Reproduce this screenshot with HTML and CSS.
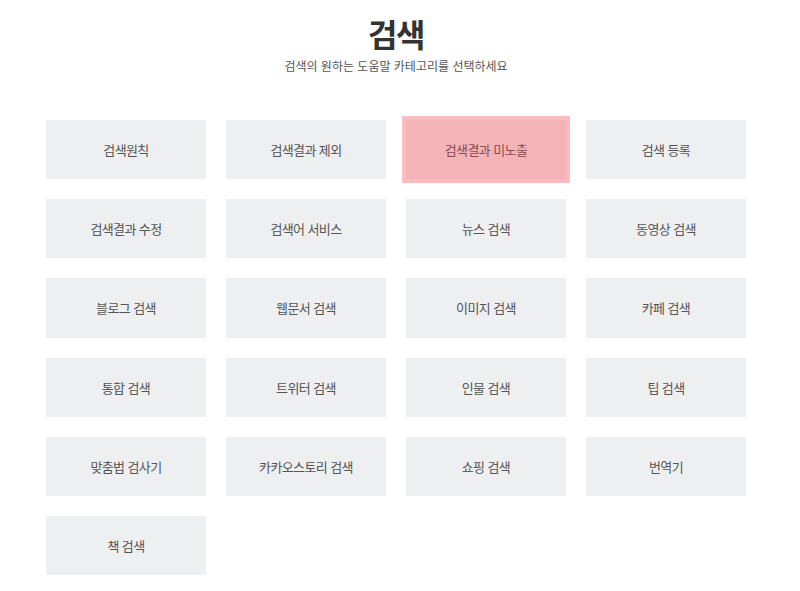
FILE: index.html
```html
<!DOCTYPE html>
<html lang="ko">
<head>
<meta charset="utf-8">
<title>검색</title>
<link rel="stylesheet" href="styles.css">
</head>
<body>
<div class="page">
  <header class="head">
    <h1 class="title">검색</h1>
    <p class="sub">검색의 원하는 도움말 카테고리를 선택하세요</p>
  </header>
  <ul class="grid">
    <li class="cell">검색원칙</li>
    <li class="cell">검색결과 제외</li>
    <li class="cell cell-active">검색결과 미노출</li>
    <li class="cell">검색 등록</li>
    <li class="cell">검색결과 수정</li>
    <li class="cell">검색어 서비스</li>
    <li class="cell">뉴스 검색</li>
    <li class="cell">동영상 검색</li>
    <li class="cell">블로그 검색</li>
    <li class="cell">웹문서 검색</li>
    <li class="cell">이미지 검색</li>
    <li class="cell">카페 검색</li>
    <li class="cell">통합 검색</li>
    <li class="cell">트위터 검색</li>
    <li class="cell">인물 검색</li>
    <li class="cell">팁 검색</li>
    <li class="cell">맞춤법 검사기</li>
    <li class="cell">카카오스토리 검색</li>
    <li class="cell">쇼핑 검색</li>
    <li class="cell">번역기</li>
    <li class="cell">책 검색</li>
  </ul>
</div>
</body>
</html>
```

FILE: styles.css
```css
html, body {
  margin: 0;
  padding: 0;
  background: #ffffff;
}
body {
  font-family: "Noto Sans CJK KR", "Noto Sans", sans-serif;
  color: #555;
}
.page {
  width: 700px;
  margin-left: 46px;
}
.head {
  padding-top: 13px;
  text-align: center;
}
.title {
  margin: 0;
  font-size: 32px;
  line-height: 40px;
  font-weight: 700;
  color: #333;
  letter-spacing: -1.5px;
}
.sub {
  margin: 4px 0 0;
  font-size: 12px;
  line-height: 18px;
  color: #555;
  letter-spacing: 0;
}
.grid {
  list-style: none;
  margin: 45px 0 0;
  padding: 0;
  display: grid;
  grid-template-columns: repeat(4, 160px);
  grid-auto-rows: 59.2px;
  column-gap: 20px;
  row-gap: 20px;
}
.cell {
  display: flex;
  align-items: center;
  justify-content: center;
  background: #eeeff1;
  font-size: 13px;
  letter-spacing: -0.6px;
  color: #555;
}
.cell-active {
  background: #f4b4b7;
  outline: 4px solid #ffbcc0;
  outline-offset: 0;
  color: #8a4c52;
}
```
